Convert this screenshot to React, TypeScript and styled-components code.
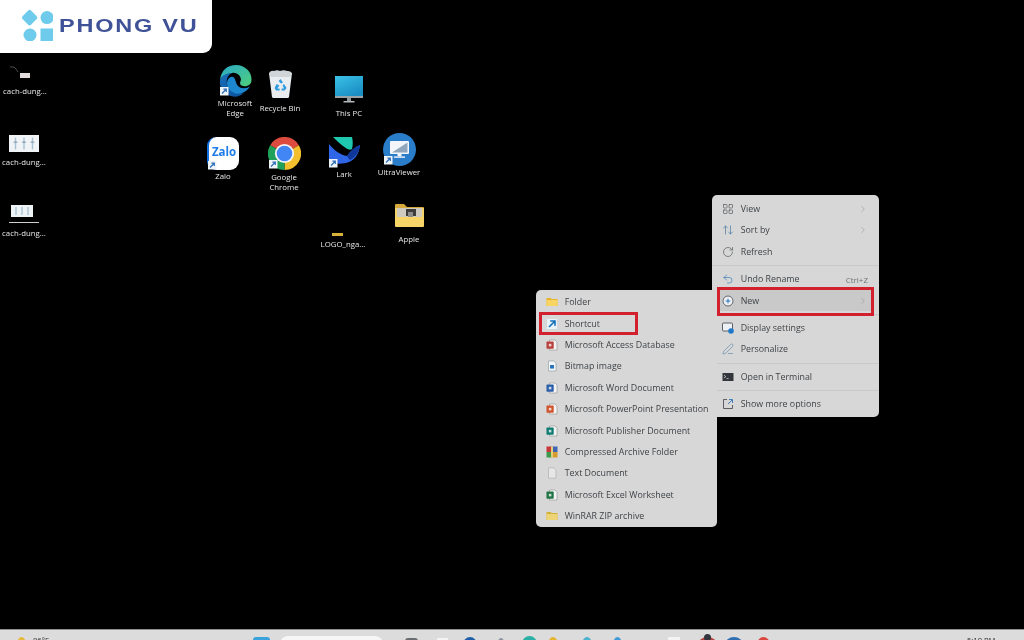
import React from 'react';
import styled, { createGlobalStyle } from 'styled-components';
import {
  ChevronRight,
  LayoutGrid,
  ArrowUpDown,
  RotateCw,
  Undo2,
  PenLine,
} from 'lucide-react';

const GlobalStyle = createGlobalStyle`
  html, body {
    margin: 0;
    padding: 0;
    background: #000;
  }
  body {
    font-family: "Open Sans", "Liberation Sans", sans-serif;
  }
`;

const Screen = styled.div`
  width: 1024px;
  height: 640px;
  display: flex;
  flex-direction: column;
  overflow: hidden;
  background: #000;
  filter: blur(0.35px);
`;

const Desktop = styled.div`
  position: relative;
  flex: 1;
`;

// Logo
const LogoPanel = styled.div`
  position: absolute;
  left: 0;
  top: 0;
  width: 212px;
  height: 53px;
  box-sizing: border-box;
  padding: 9px 0 0 21px;
  display: flex;
  align-items: flex-start;
  gap: 6px;
  background: #fff;
  border-bottom-right-radius: 9px;
`;

const LogoText = styled.span`
  font-family: "Liberation Sans", sans-serif;
  font-weight: 700;
  font-size: 18.5px;
  line-height: 33px;
  letter-spacing: 1.4px;
  color: #3f5197;
  white-space: nowrap;
  transform: scaleX(1.27);
  transform-origin: left center;
`;

// Desktop icons
const IconItem = styled.div<{ $x: number; $y: number }>`
  position: absolute;
  left: ${(p) => p.$x - 35}px;
  top: ${(p) => p.$y}px;
  width: 70px;
  display: flex;
  flex-direction: column;
  align-items: center;
`;

const IconLabel = styled.span<{ $gap: number }>`
  margin-top: ${(p) => p.$gap}px;
  font-size: 7.8px;
  line-height: 10px;
  color: #e8e8e8;
  text-align: center;
  white-space: pre-line;
`;

const Shortcut = () => (
  <g>
    <rect x="1" y="23" width="8.5" height="8.5" fill="#eef3f8" />
    <path d="M3 29.5 L7 25.5 M4.4 25.2 H7.3 V28.1" stroke="#2c6fb8" strokeWidth="1.2" fill="none" />
  </g>
);

const EdgeIcon = () => (
  <svg width="33" height="33" viewBox="0 0 33 33">
    <defs>
      <linearGradient id="edgeA" x1="0" y1="0" x2="1" y2="1">
        <stop offset="0" stopColor="#2aa9c9" />
        <stop offset="1" stopColor="#4fd07a" />
      </linearGradient>
      <linearGradient id="edgeB" x1="0" y1="0" x2="1" y2="1">
        <stop offset="0" stopColor="#1a6fb8" />
        <stop offset="1" stopColor="#0b4f9c" />
      </linearGradient>
    </defs>
    <path d="M1 16 C2 6 9 1 17 1 C26 1 33 8 32.5 16 C32.5 21 28 23 24 22 C20 21 21 18 22 16 C22 11 17 8 13 9 C7 10 2 13 1 16 Z" fill="url(#edgeA)" />
    <path d="M1 16 C3 11 8 9 13 9 C9 11 7 15 8 20 C10 27 18 31 25 29 C21 32.5 17 33 14 32.5 C6 31.5 0 25 1 16 Z" fill="url(#edgeB)" />
    <path d="M8 20 C8 15 11 12 14 13 C17 14 16 19 19 22 C22 25 28 25 31 22 C29 26 26 28 22 29.6 C15 31 9 26 8 20 Z" fill="#1c86cf" />
    <Shortcut />
  </svg>
);

const BinIcon = () => (
  <svg width="25" height="28" viewBox="0 0 25 28">
    <path d="M1 3 L24 3 L21 27 Q20.6 28 19.5 28 L5.5 28 Q4.4 28 4 27 Z" fill="#e9edf0" />
    <path d="M1 3 Q3 0 6 1 Q9 -0.5 12 1 Q16 -0.5 19 1 Q22 0.5 24 3 L22 7 L3 7 Z" fill="#cfd5d8" />
    <path d="M12.5 9 L15 12.6 L13 13.6 L10.6 11 Z M16 14 L18.6 18 L16.6 20.6 L13.6 20.6 L13.6 18.6 L16 18.4 L14.6 15.6 Z M8.6 14 L11.4 15.4 L9.4 18.6 L11.6 18.6 L11.6 20.6 L8 20.6 L6.6 18 Z" fill="#2f9be0" />
  </svg>
);

const PcIcon = () => (
  <svg width="28" height="27" viewBox="0 0 28 27">
    <defs>
      <linearGradient id="pcA" x1="0" y1="0" x2="0.6" y2="1">
        <stop offset="0" stopColor="#3bc2e8" />
        <stop offset="1" stopColor="#1b8fc4" />
      </linearGradient>
    </defs>
    <rect x="0" y="0" width="28" height="20" fill="url(#pcA)" />
    <rect x="0" y="20" width="28" height="2" fill="#9aa3a8" />
    <rect x="12" y="22" width="4" height="3" fill="#8f979c" />
    <rect x="8.5" y="25" width="11" height="1.5" fill="#b2b8bc" />
  </svg>
);

const ZaloTile = styled.div`
  position: relative;
  width: 32px;
  height: 33px;
  border-radius: 9px;
  background: #fff;
  border-left: 2px solid #0f6fe0;
  box-sizing: border-box;
  display: flex;
  align-items: center;
  justify-content: center;
`;

const ZaloWord = styled.span`
  font-family: "Open Sans", sans-serif;
  font-weight: 700;
  font-size: 11.5px;
  line-height: 12px;
  color: #1f7be8;
  margin-top: -3px;
`;

const TileBadge = styled.svg`
  position: absolute;
  left: -2px;
  bottom: 0;
`;

const ZaloIcon = () => (
  <ZaloTile>
    <ZaloWord>Zalo</ZaloWord>
    <TileBadge width="11" height="11" viewBox="0 21 11 11">
      <Shortcut />
    </TileBadge>
  </ZaloTile>
);

const ChromeIcon = () => (
  <svg width="33" height="33" viewBox="0 0 33 33">
    <path d="M16.5 16.5 L2.2 8.2 A16.5 16.5 0 0 1 30.8 8.2 Z" fill="#dd4b3e" />
    <path d="M16.5 16.5 L30.8 8.2 A16.5 16.5 0 0 1 16.5 33 Z" fill="#f4bf2c" />
    <path d="M16.5 16.5 L16.5 33 A16.5 16.5 0 0 1 2.2 8.2 Z" fill="#1fa15a" />
    <circle cx="16.5" cy="16.5" r="9.6" fill="#f4f4f4" />
    <circle cx="16.5" cy="16.5" r="7.8" fill="#4285f4" />
    <Shortcut />
  </svg>
);

const LarkIcon = () => (
  <svg width="33" height="33" viewBox="0 0 33 33">
    <path d="M5 1 L24 1 C25 5 25 9 24 13 C21 15 18 12 15 10 C11 7 8 4 5 1 Z" fill="#1fc9b0" />
    <path d="M1 8 C6 14 12 19 19 20 C22 15 27 11 32 9 C31 18 27 25 18 27 C12 28 6 28 1 26 Z" fill="#2f66e8" />
    <path d="M19 20 C22 15 27 11 32 9 C31 16 28 21 22 24 C21 23 20 22 19 20 Z" fill="#10389a" />
    <Shortcut />
  </svg>
);

const UltraIcon = () => (
  <svg width="33" height="33" viewBox="0 0 33 33">
    <circle cx="16.5" cy="16.5" r="16.5" fill="#2a7dc9" />
    <rect x="7" y="8" width="19" height="13" rx="1" fill="#f2f6fa" />
    <path d="M9 19.5 L24.5 9.5 V19.5 Z" fill="#8fa6bd" />
    <rect x="14.5" y="21" width="4" height="2.4" fill="#f2f6fa" />
    <rect x="11" y="23.4" width="11" height="1.4" fill="#f2f6fa" />
    <Shortcut />
  </svg>
);

const LogoBar = styled.div`
  width: 11px;
  height: 3px;
  margin-left: -11px;
  background: #d8b13a;
`;

const AppleFolder = () => (
  <svg width="29" height="23" viewBox="0 0 29 23">
    <path d="M0 1 Q0 0 1 0 H9 L12 3 H28 Q29 3 29 4 V8 H0 Z" fill="#d6a93c" />
    <rect x="0" y="4" width="29" height="19" rx="1" fill="#f7d467" />
    <rect x="2" y="4" width="25" height="9" fill="#cfcac0" />
    <rect x="11" y="5" width="10" height="7" fill="#3c3c3c" />
    <rect x="13" y="8" width="5" height="5" fill="#8b8b8b" />
  </svg>
);

const SheetThumb = () => (
  <svg width="30" height="17" viewBox="0 0 30 17">
    <rect width="30" height="17" fill="#f0f4f6" />
    {[6.5, 15, 23.5].map((x) => (
      <g key={x}>
        <rect x={x - 0.7} y="2.5" width="1.4" height="12" fill="#a9c2d4" />
        <rect x={x - 1.8} y="6.5" width="3.6" height="1.4" fill="#8ea3b5" />
      </g>
    ))}
  </svg>
);

const LinedThumb = () => (
  <svg width="30" height="18" viewBox="0 0 30 18">
    <rect x="2" width="22" height="12" fill="#eef3f5" />
    {[7, 13, 19].map((x) => (
      <rect key={x} x={x - 0.7} y="2" width="1.4" height="8" fill="#a9c2d4" />
    ))}
    <rect y="17" width="30" height="1" fill="#cfcfcf" />
  </svg>
);

const SmallThumb = () => (
  <svg width="30" height="13" viewBox="0 0 30 13">
    <path d="M0 1 H4 L6 3 L8 6" stroke="#6a6a6a" strokeWidth="0.7" fill="none" />
    <rect x="10" y="7" width="10" height="5" fill="#e2dcdc" />
  </svg>
);

const desktopIcons = [
  { x: 25, y: 66, gap: 7, label: 'cach-dung...', art: <SmallThumb /> },
  { x: 24, y: 135, gap: 5, label: 'cach-dung...', art: <SheetThumb /> },
  { x: 24, y: 205, gap: 5, label: 'cach-dung...', art: <LinedThumb /> },
  { x: 235, y: 64, gap: 1, label: 'Microsoft\nEdge', art: <EdgeIcon /> },
  { x: 280, y: 70, gap: 5, label: 'Recycle Bin', art: <BinIcon /> },
  { x: 349, y: 76, gap: 5, label: 'This PC', art: <PcIcon /> },
  { x: 223, y: 137, gap: 1, label: 'Zalo', art: <ZaloIcon /> },
  { x: 284, y: 137, gap: 2, label: 'Google\nChrome', art: <ChromeIcon /> },
  { x: 344, y: 136, gap: 0, label: 'Lark', art: <LarkIcon /> },
  { x: 399, y: 133, gap: 1, label: 'UltraViewer', art: <UltraIcon /> },
  { x: 343, y: 233, gap: 3, label: 'LOGO_nga...', art: <LogoBar /> },
  { x: 409, y: 204, gap: 7, label: 'Apple', art: <AppleFolder /> },
];

// Context menus
const Menu = styled.div<{ $x: number; $y: number; $w: number; $h: number; $pad: number; $top?: boolean }>`
  position: absolute;
  left: ${(p) => p.$x}px;
  top: ${(p) => p.$y}px;
  width: ${(p) => p.$w}px;
  height: ${(p) => p.$h}px;
  z-index: ${(p) => (p.$top ? 2 : 1)};
  box-sizing: border-box;
  padding: ${(p) => p.$pad}px 5px 0;
  display: flex;
  flex-direction: column;
  border-radius: 5px;
  background: #d7d7d7;
`;

const Row = styled.div<{ $hover?: boolean }>`
  position: relative;
  flex: none;
  height: 21.4px;
  display: flex;
  align-items: center;
  border-radius: 3px;
  background: ${(p) => (p.$hover ? '#c9c9c9' : 'transparent')};
  font-size: 8.85px;
  color: #3f4347;
  white-space: nowrap;
`;

const RowIcon = styled.span`
  flex: none;
  width: 21px;
  margin-right: 2.7px;
  display: flex;
  justify-content: center;
`;

const RowLabel = styled.span`
  flex: 1;
`;

const RowHint = styled.span`
  margin-right: 6px;
  font-size: 8px;
  color: #6f7276;
`;

const Chevron = styled(ChevronRight)`
  margin-right: 6px;
  color: #7c7f82;
`;

const Separator = styled.div`
  flex: none;
  height: 6px;
  margin: 0 -5px;
  display: flex;
  align-items: center;
  &::before {
    content: '';
    flex: 1;
    height: 1px;
    background: #c8c8c8;
  }
`;

const NewMark = styled.div`
  position: absolute;
  left: 0;
  right: 0;
  top: -2.5px;
  bottom: -5px;
  border: 3px solid #d3202e;
  box-sizing: border-box;
`;

const ShortcutMark = styled.div`
  position: absolute;
  left: -2px;
  width: 99px;
  top: -1px;
  bottom: -1px;
  border: 3px solid #d3202e;
  box-sizing: border-box;
`;

const s = { width: 12, height: 12, viewBox: '0 0 12 12', fill: 'none' };

const PlusCircle = () => (
  <svg {...s}>
    <circle cx="6" cy="6" r="5" fill="#eef1f4" stroke="#55595e" strokeWidth="0.9" />
    <path d="M6 3.6 V8.4 M3.6 6 H8.4" stroke="#2f74b5" strokeWidth="1" />
  </svg>
);

const DisplayIcon = () => (
  <svg {...s}>
    <rect x="0.5" y="1" width="10" height="8" rx="1" fill="#eef1f4" stroke="#4a5058" strokeWidth="0.9" />
    <circle cx="9" cy="9" r="2.8" fill="#1f78c8" />
  </svg>
);

const TerminalIcon = () => (
  <svg {...s}>
    <rect x="0.5" y="2" width="11" height="8" fill="#33363a" />
    <path d="M2 4.2 L3.8 5.6 L2 7 M4.6 7.6 H6.6" stroke="#e8e8e8" strokeWidth="0.7" />
  </svg>
);

const MoreIcon = () => (
  <svg {...s}>
    <path d="M5 1.5 H1.5 V10.5 H10.5 V7" stroke="#4f5458" strokeWidth="0.9" />
    <path d="M7 1.5 H10.5 V5 M6 6 L10 2" stroke="#2f74b5" strokeWidth="0.9" />
  </svg>
);

const FolderGlyph = ({ dim }: { dim?: boolean }) => (
  <svg {...s}>
    <path d="M0.5 2 H4.5 L5.5 3 H11.5 V10 H0.5 Z" fill={dim ? '#d3b036' : '#e6b32a'} />
    <rect x="0.5" y="4" width="11" height="6" fill={dim ? '#ecd477' : '#f8d463'} />
  </svg>
);

const ArrowGlyph = () => (
  <svg {...s}>
    <rect x="1" y="1" width="10" height="10" fill="#e7f2f9" />
    <path d="M3 9 L8.5 3.5 M4.2 3 H9 V7.8" stroke="#1671b8" strokeWidth="1.6" />
  </svg>
);

const OfficeGlyph = ({ color }: { color: string }) => (
  <svg {...s}>
    <path d="M3.5 1 H9 L11 3 V11 H3.5 Z" fill="#f4f4f4" stroke="#8f8f8f" strokeWidth="0.6" />
    <rect x="0.5" y="2.5" width="7.2" height="7.2" rx="0.8" fill={color} />
    <rect x="2.8" y="4.8" width="2.6" height="2.6" fill="#fff" opacity="0.75" />
  </svg>
);

const BitmapGlyph = () => (
  <svg {...s}>
    <path d="M2.5 1 H8 L10 3 V11 H2.5 Z" fill="#f4f6f8" stroke="#8894a0" strokeWidth="0.6" />
    <rect x="4" y="5" width="4" height="3.6" fill="#2b75bd" />
  </svg>
);

const RarGlyph = () => (
  <svg {...s}>
    <rect x="0.5" y="0.5" width="5.5" height="5.5" fill="#c8373a" />
    <rect x="6" y="0.5" width="5.5" height="5.5" fill="#3f66b5" />
    <rect x="0.5" y="6" width="5.5" height="5.5" fill="#3c9a4a" />
    <rect x="6" y="6" width="5.5" height="5.5" fill="#d69a2d" />
    <rect x="5" y="0.5" width="2" height="11" fill="#e6cf7a" />
  </svg>
);

const TextGlyph = () => (
  <svg {...s}>
    <path d="M2.5 0.8 H8 L10 3 V11.2 H2.5 Z" fill="#e6e6e6" stroke="#a8a8a8" strokeWidth="0.6" />
  </svg>
);

const lucideProps = { size: 12, strokeWidth: 1.3, color: '#4f5458' };

const subItems: { label: string; icon: React.ReactNode; mark?: boolean }[] = [
  { label: 'Folder', icon: <FolderGlyph /> },
  { label: 'Shortcut', icon: <ArrowGlyph />, mark: true },
  { label: 'Microsoft Access Database', icon: <OfficeGlyph color="#b8403c" /> },
  { label: 'Bitmap image', icon: <BitmapGlyph /> },
  { label: 'Microsoft Word Document', icon: <OfficeGlyph color="#2a5ea8" /> },
  { label: 'Microsoft PowerPoint Presentation', icon: <OfficeGlyph color="#d0532c" /> },
  { label: 'Microsoft Publisher Document', icon: <OfficeGlyph color="#0f7b70" /> },
  { label: 'Compressed Archive Folder', icon: <RarGlyph /> },
  { label: 'Text Document', icon: <TextGlyph /> },
  { label: 'Microsoft Excel Worksheet', icon: <OfficeGlyph color="#217346" /> },
  { label: 'WinRAR ZIP archive', icon: <FolderGlyph dim /> },
];

// Taskbar, almost entirely cut off by the bottom edge of the picture
const Taskbar = styled.div`
  flex: none;
  height: 11px;
  box-sizing: border-box;
  border-top: 1px solid #8f8f8f;
  background: #dcdcdc;
  display: flex;
  align-items: flex-start;
  overflow: hidden;
`;

const Tray = styled.div<{ $ml: number; $mt: number; $w: number; $c: string; $r?: string }>`
  position: relative;
  flex: none;
  margin-left: ${(p) => p.$ml}px;
  margin-top: ${(p) => p.$mt}px;
  width: ${(p) => p.$w}px;
  height: 16px;
  border-radius: ${(p) => p.$r || '50%'};
  background: ${(p) => p.$c};
`;

const AvatarTray = styled(Tray)`
  &::before {
    content: '';
    position: absolute;
    left: 6px;
    top: -3px;
    width: 7px;
    height: 7px;
    border-radius: 50%;
    background: #33363f;
  }
`;

const BarText = styled.span<{ $ml: number; $w: number }>`
  flex: none;
  width: ${(p) => p.$w}px;
  margin-left: ${(p) => p.$ml}px;
  margin-top: 5px;
  font-size: 7.6px;
  line-height: 10px;
  color: #333;
  white-space: nowrap;
`;

const trayIcons = [
  { ml: 202, mt: 7, w: 17, c: '#3aa3dc', r: '3px' },
  { ml: 10, mt: 6, w: 103, c: '#f6f6f6', r: '8px' },
  { ml: 22, mt: 8, w: 13, c: '#6a6e72', r: '3px' },
  { ml: 19, mt: 8, w: 11, c: '#f4f4f4', r: '1px' },
  { ml: 15, mt: 7, w: 14, c: '#1f5fa8' },
  { ml: 20, mt: 8, w: 8, c: '#8b93a0' },
  { ml: 17, mt: 6, w: 15, c: '#2bb0a5' },
  { ml: 11, mt: 7, w: 10, c: '#e4b52e' },
  { ml: 24, mt: 7, w: 10, c: '#48b4cf' },
  { ml: 21, mt: 7, w: 9, c: '#3f9bd8' },
  { ml: 46, mt: 7, w: 12, c: '#f4f4f4', r: '1px' },
];

export default function App() {
  return (
    <Screen>
      <GlobalStyle />
      <Desktop>
        <LogoPanel>
          <svg width="32" height="32" viewBox="0 0 32 32">
            <rect x="2.6" y="2.6" width="12" height="12" rx="2" transform="rotate(45 8.6 8.6)" fill="#6fcbec" />
            <circle cx="26" cy="8.6" r="6.5" fill="#6fcbec" />
            <circle cx="9" cy="26" r="6.5" fill="#6fcbec" />
            <rect x="19.5" y="19.5" width="13" height="13" fill="#6fcbec" />
          </svg>
          <LogoText>PHONG VU</LogoText>
        </LogoPanel>

        {desktopIcons.map((item) => (
          <IconItem key={`${item.label}${item.y}`} $x={item.x} $y={item.y}>
            {item.art}
            <IconLabel $gap={item.gap}>{item.label}</IconLabel>
          </IconItem>
        ))}

        <Menu $x={712} $y={195} $w={167} $h={222} $pad={3.3}>
          <Row>
            <RowIcon><LayoutGrid {...lucideProps} /></RowIcon>
            <RowLabel>View</RowLabel>
            <Chevron size={10} strokeWidth={1} />
          </Row>
          <Row>
            <RowIcon><ArrowUpDown {...lucideProps} color="#3d6f9c" /></RowIcon>
            <RowLabel>Sort by</RowLabel>
            <Chevron size={10} strokeWidth={1} />
          </Row>
          <Row>
            <RowIcon><RotateCw {...lucideProps} /></RowIcon>
            <RowLabel>Refresh</RowLabel>
          </Row>
          <Separator />
          <Row>
            <RowIcon><Undo2 {...lucideProps} color="#2f74b5" /></RowIcon>
            <RowLabel>Undo Rename</RowLabel>
            <RowHint>Ctrl+Z</RowHint>
          </Row>
          <Row $hover>
            <RowIcon><PlusCircle /></RowIcon>
            <RowLabel>New</RowLabel>
            <Chevron size={10} strokeWidth={1} />
            <NewMark />
          </Row>
          <Separator />
          <Row>
            <RowIcon><DisplayIcon /></RowIcon>
            <RowLabel>Display settings</RowLabel>
          </Row>
          <Row>
            <RowIcon><PenLine {...lucideProps} color="#5f88ad" /></RowIcon>
            <RowLabel>Personalize</RowLabel>
          </Row>
          <Separator />
          <Row>
            <RowIcon><TerminalIcon /></RowIcon>
            <RowLabel>Open in Terminal</RowLabel>
          </Row>
          <Separator />
          <Row>
            <RowIcon><MoreIcon /></RowIcon>
            <RowLabel>Show more options</RowLabel>
          </Row>
        </Menu>

        <Menu $x={536} $y={290} $w={181} $h={237} $pad={1.6} $top>
          {subItems.map((item) => (
            <Row key={item.label}>
              <RowIcon>{item.icon}</RowIcon>
              <RowLabel>{item.label}</RowLabel>
              {item.mark && <ShortcutMark />}
            </Row>
          ))}
        </Menu>
      </Desktop>

      <Taskbar>
        <Tray $ml={17} $mt={7} $w={9} $c="#e5b93a" />
        <BarText $ml={7} $w={18}>86°F</BarText>
        {trayIcons.map((t, i) => (
          <Tray key={i} $ml={t.ml} $mt={t.mt} $w={t.w} $c={t.c} $r={t.r} />
        ))}
        <AvatarTray $ml={18} $mt={7} $w={19} $c="#b5423c" />
        <Tray $ml={8} $mt={7} $w={18} $c="#2f6fb0" />
        <Tray $ml={14} $mt={7} $w={13} $c="#d9473f" />
        <BarText $ml={197} $w={30}>5:10 PM</BarText>
      </Taskbar>
    </Screen>
  );
}
